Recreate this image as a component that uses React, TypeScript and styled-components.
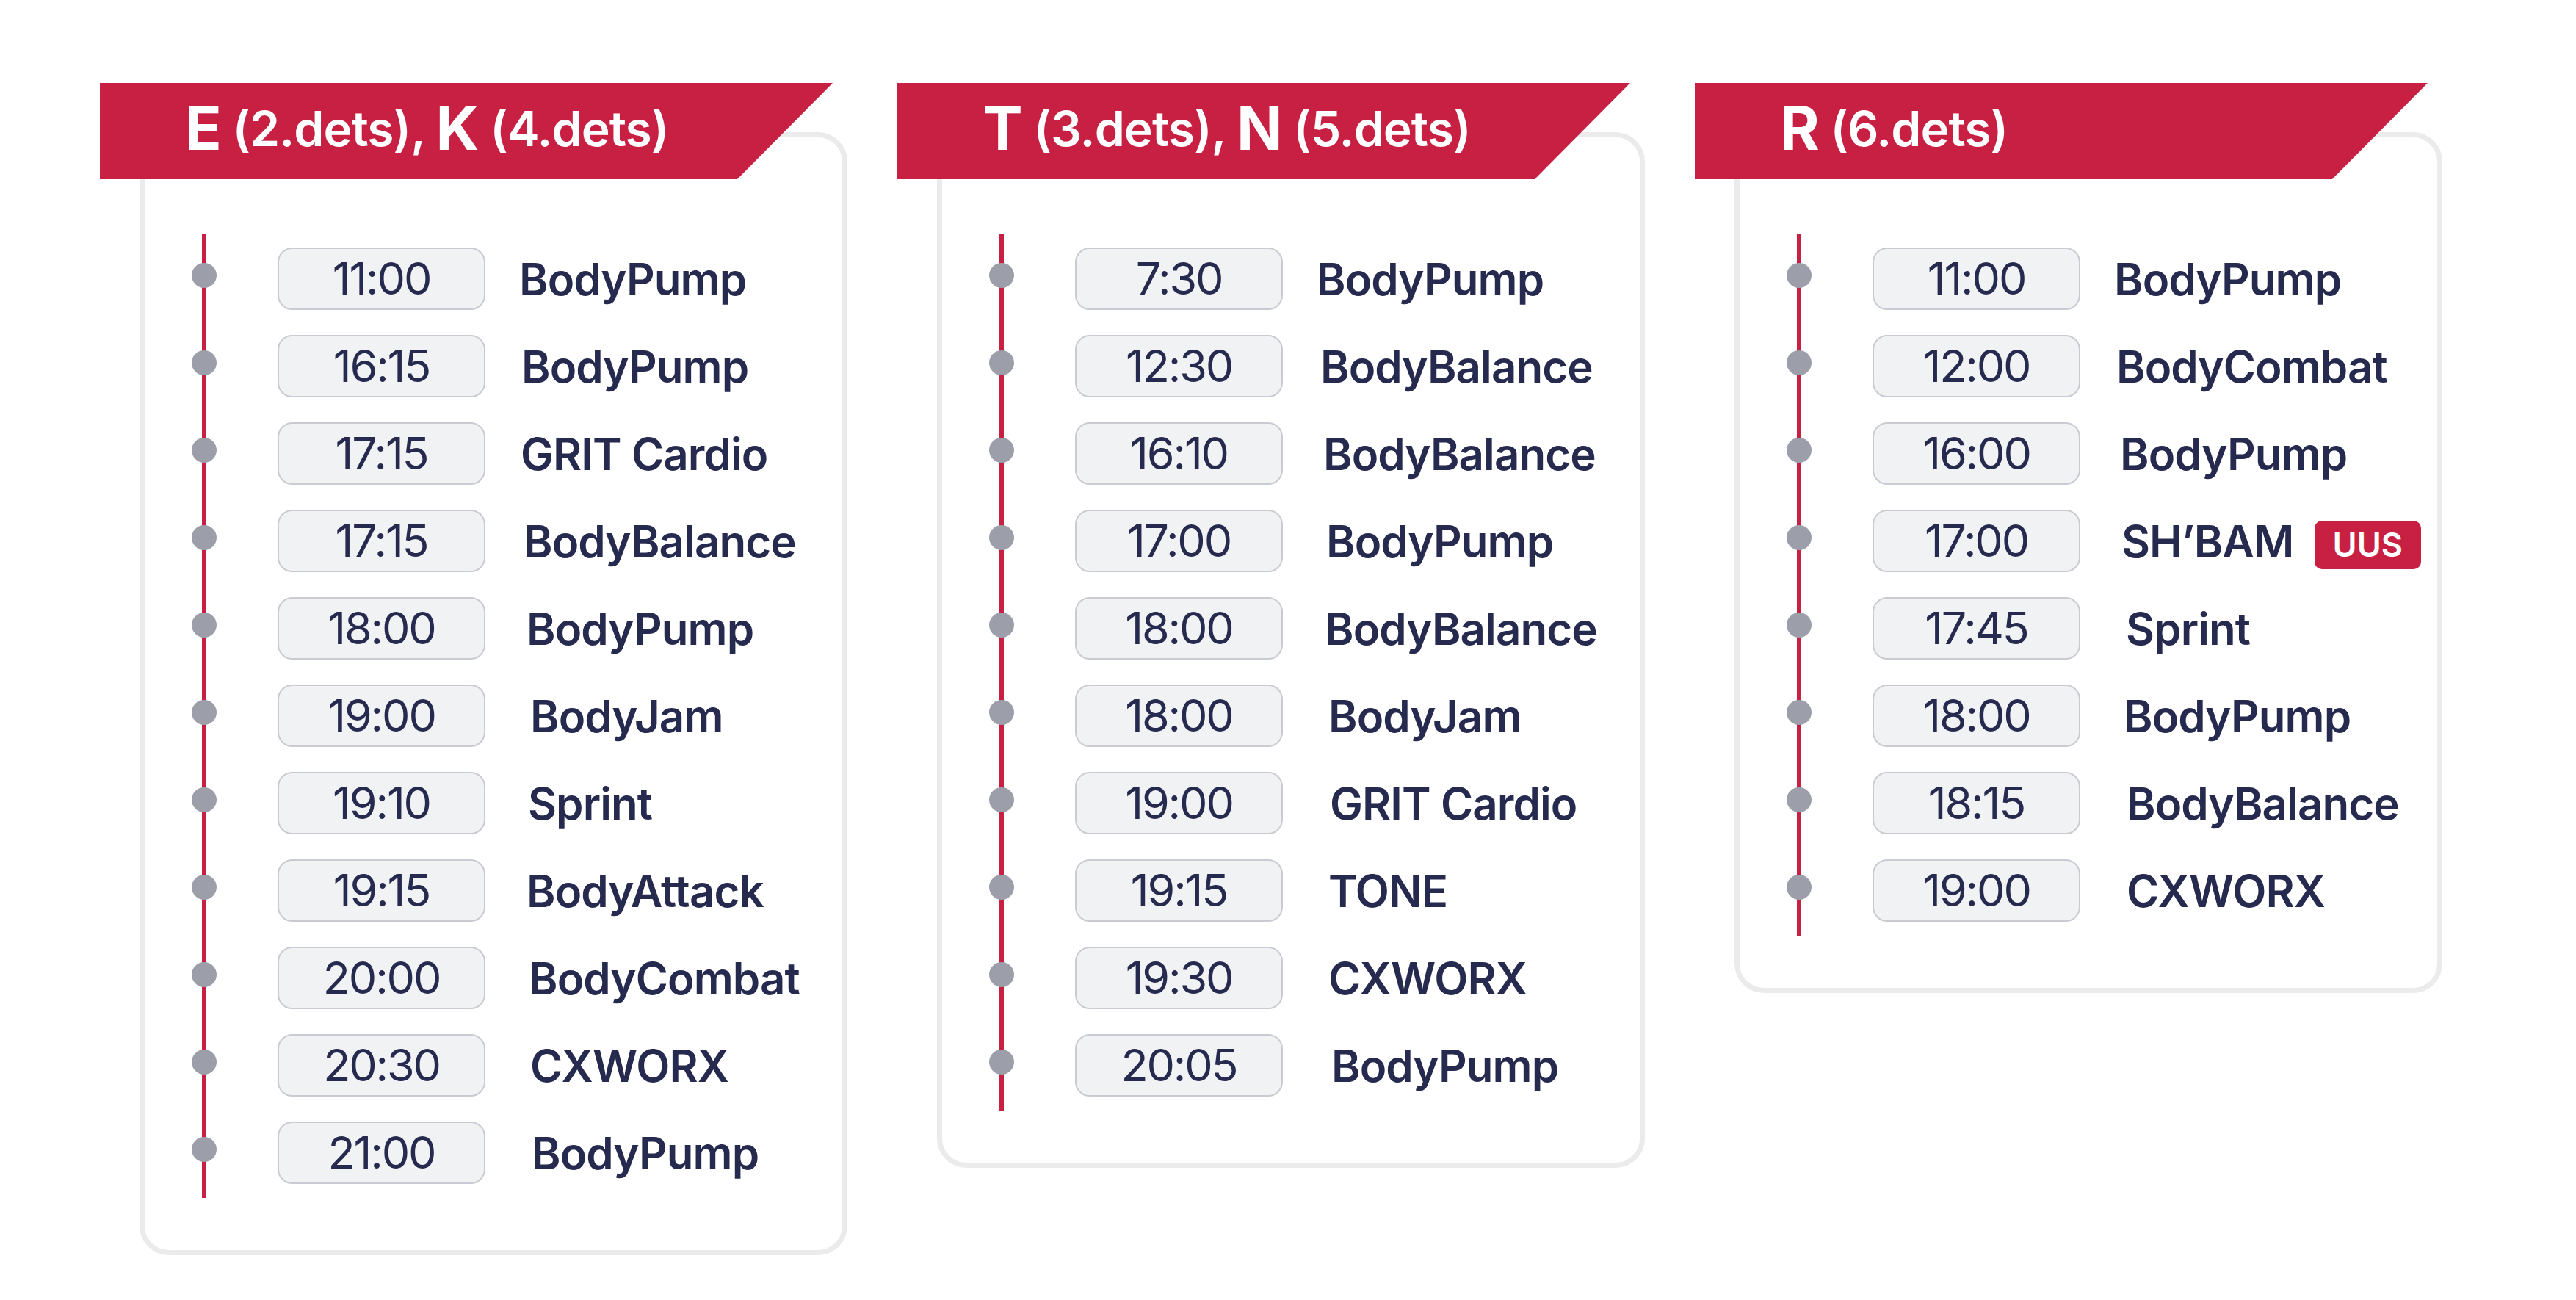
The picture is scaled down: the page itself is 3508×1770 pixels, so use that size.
import React from "react";
import styled, { createGlobalStyle } from "styled-components";

const RED = "#c72042";
const NAVY = "#262a4e";

const Global = createGlobalStyle`
  html, body { margin: 0; padding: 0; background: #ffffff; }
  body { font-family: Inter, "Noto Sans", Arial, sans-serif; }
`;

const Page = styled.main`
  display: flex;
  align-items: flex-start;
  gap: 122px;
  padding: 113px 0 0 190px;
  width: 3508px;
  height: 1770px;
  box-sizing: border-box;
`;

const Column = styled.section`
  display: flex;
  flex-direction: column;
  width: 964px;
`;

const Ribbon = styled.h2`
  position: relative;
  z-index: 1;
  margin: 0 0 0 -54px;
  width: 998px;
  height: 131px;
  box-sizing: border-box;
  padding: 0 0 8px 116px;
  display: flex;
  align-items: center;
  background: ${RED};
  clip-path: polygon(0 0, 100% 0, calc(100% - 130px) 100%, 0 100%);
  color: #ffffff;
  font-weight: 600;
  font-size: 66px;
  line-height: 1;
  letter-spacing: -0.015em;
  white-space: pre;
`;

const Big = styled.span`
  font-size: 82px;
  font-weight: 700;
`;

const Card = styled.div`
  margin-top: -64px;
  border: 7px solid #ebebec;
  border-radius: 40px;
  background: #ffffff;
  padding: 131px 0 71px 0;
`;

const Timeline = styled.ul`
  list-style: none;
  margin: 0;
  padding: 19px 0;
  display: flex;
  flex-direction: column;
  gap: 34px;
  background: linear-gradient(${RED}, ${RED}) no-repeat 78px 0 / 6px 100%;
`;

const Row = styled.li`
  display: flex;
  align-items: center;
  height: 85px;
`;

const Dot = styled.span`
  flex: none;
  width: 34px;
  height: 34px;
  margin: 0 0 10px 64px;
  border-radius: 50%;
  background: #9c9eaa;
`;

const TimeBox = styled.span`
  flex: none;
  width: 283px;
  height: 85px;
  margin-left: 83px;
  box-sizing: border-box;
  border: 2px solid #cacbd2;
  border-radius: 20px;
  background: #f1f2f4;
  display: flex;
  align-items: center;
  justify-content: center;
  color: ${NAVY};
  font-size: 61px;
  font-weight: 400;
  line-height: 1;
  letter-spacing: -0.035em;
`;

const Name = styled.span<{ $shift: number }>`
  margin-left: ${(p) => 46 + p.$shift}px;
  color: ${NAVY};
  font-size: 60px;
  font-weight: 600;
  line-height: 1;
  letter-spacing: -0.015em;
  white-space: nowrap;
`;

const Badge = styled.span`
  margin-left: 28px;
  height: 66px;
  padding: 0 25px;
  border-radius: 10px;
  background: ${RED};
  color: #ffffff;
  font-size: 45px;
  font-weight: 600;
  line-height: 1;
  display: flex;
  align-items: center;
  margin-top: 10px;
`;

type Item = { time: string; name: string; shift: number; badge?: string };
type Day = { parts: [string, string][]; items: Item[] };

const days: Day[] = [
  {
    parts: [
      ["E", " (2.dets), "],
      ["K", " (4.dets)"],
    ],
    items: [
      { time: "11:00", name: "BodyPump", shift: 0 },
      { time: "16:15", name: "BodyPump", shift: 3 },
      { time: "17:15", name: "GRIT Cardio", shift: 2 },
      { time: "17:15", name: "BodyBalance", shift: 6 },
      { time: "18:00", name: "BodyPump", shift: 10 },
      { time: "19:00", name: "BodyJam", shift: 15 },
      { time: "19:10", name: "Sprint", shift: 12 },
      { time: "19:15", name: "BodyAttack", shift: 10 },
      { time: "20:00", name: "BodyCombat", shift: 13 },
      { time: "20:30", name: "CXWORX", shift: 15 },
      { time: "21:00", name: "BodyPump", shift: 17 },
    ],
  },
  {
    parts: [
      ["T", " (3.dets), "],
      ["N", " (5.dets)"],
    ],
    items: [
      { time: "7:30", name: "BodyPump", shift: 0 },
      { time: "12:30", name: "BodyBalance", shift: 5 },
      { time: "16:10", name: "BodyBalance", shift: 9 },
      { time: "17:00", name: "BodyPump", shift: 13 },
      { time: "18:00", name: "BodyBalance", shift: 11 },
      { time: "18:00", name: "BodyJam", shift: 16 },
      { time: "19:00", name: "GRIT Cardio", shift: 18 },
      { time: "19:15", name: "TONE", shift: 16 },
      { time: "19:30", name: "CXWORX", shift: 16 },
      { time: "20:05", name: "BodyPump", shift: 20 },
    ],
  },
  {
    parts: [["R", " (6.dets)"]],
    items: [
      { time: "11:00", name: "BodyPump", shift: 0 },
      { time: "12:00", name: "BodyCombat", shift: 3 },
      { time: "16:00", name: "BodyPump", shift: 8 },
      { time: "17:00", name: "SH\u2019BAM", shift: 10, badge: "UUS" },
      { time: "17:45", name: "Sprint", shift: 16 },
      { time: "18:00", name: "BodyPump", shift: 13 },
      { time: "18:15", name: "BodyBalance", shift: 17 },
      { time: "19:00", name: "CXWORX", shift: 17 },
    ],
  },
];

export default function App() {
  return (
    <>
      <Global />
      <Page>
        {days.map((day, i) => (
          <Column key={i}>
            <Ribbon>
              {day.parts.map(([letter, rest], j) => (
                <React.Fragment key={j}>
                  <Big>{letter}</Big>
                  {rest}
                </React.Fragment>
              ))}
            </Ribbon>
            <Card>
              <Timeline>
                {day.items.map((it, k) => (
                  <Row key={k}>
                    <Dot />
                    <TimeBox>{it.time}</TimeBox>
                    <Name $shift={it.shift}>{it.name}</Name>
                    {it.badge && <Badge>{it.badge}</Badge>}
                  </Row>
                ))}
              </Timeline>
            </Card>
          </Column>
        ))}
      </Page>
    </>
  );
}
